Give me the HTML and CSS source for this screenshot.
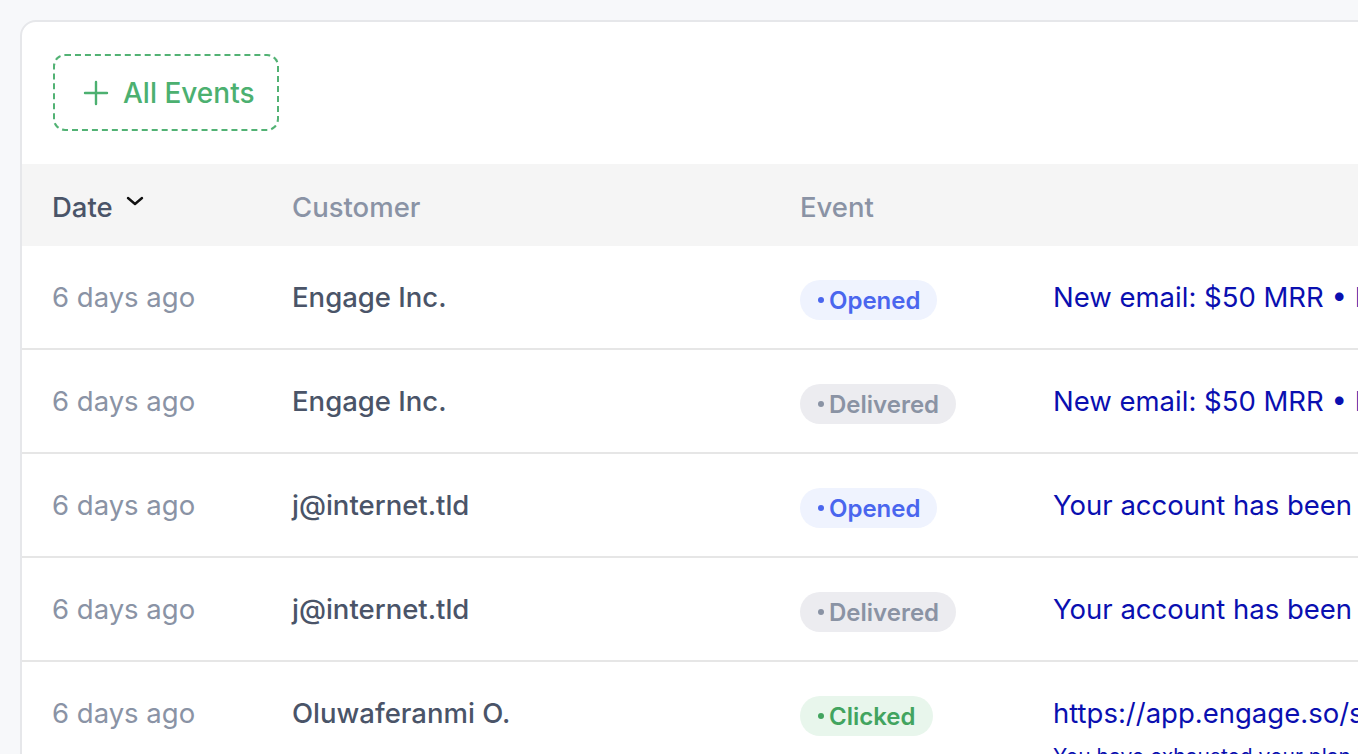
FILE: index.html
```html
<!DOCTYPE html>
<html>
<head>
<meta charset="utf-8">
<link rel="stylesheet" href="styles.css">
</head>
<body>
<div class="card">
  <div class="toolbar">
    <button class="add-btn">
      <svg class="plus" width="26" height="26" viewBox="0 0 26 26"><path d="M13 2v22M2 13h22" stroke="currentColor" stroke-width="2.4" stroke-linecap="round"/></svg>
      <span>All Events</span>
    </button>
  </div>
  <div class="table">
    <div class="row head">
      <div class="cell date-h">Date
        <svg class="chev" width="20" height="14" viewBox="0 0 20 14"><path d="M3 4l7 6 7-6" fill="none" stroke="#111" stroke-width="2.4" stroke-linecap="round" stroke-linejoin="round"/></svg>
      </div>
      <div class="cell">Customer</div>
      <div class="cell">Event</div>
      <div class="cell"></div>
    </div>
    <div class="row">
      <div class="cell date">6 days ago</div>
      <div class="cell cust">Engage Inc.</div>
      <div class="cell"><span class="badge opened"><i></i>Opened</span></div>
      <div class="cell desc"><div class="line">New email: $50 MRR • Engage Inc.</div></div>
    </div>
    <div class="row">
      <div class="cell date">6 days ago</div>
      <div class="cell cust">Engage Inc.</div>
      <div class="cell"><span class="badge delivered"><i></i>Delivered</span></div>
      <div class="cell desc"><div class="line">New email: $50 MRR • Engage Inc.</div></div>
    </div>
    <div class="row">
      <div class="cell date">6 days ago</div>
      <div class="cell cust">j@internet.tld</div>
      <div class="cell"><span class="badge opened"><i></i>Opened</span></div>
      <div class="cell desc"><div class="line">Your account has been created</div></div>
    </div>
    <div class="row">
      <div class="cell date">6 days ago</div>
      <div class="cell cust">j@internet.tld</div>
      <div class="cell"><span class="badge delivered"><i></i>Delivered</span></div>
      <div class="cell desc"><div class="line">Your account has been created</div></div>
    </div>
    <div class="row">
      <div class="cell date">6 days ago</div>
      <div class="cell cust">Oluwaferanmi O.</div>
      <div class="cell"><span class="badge clicked"><i></i>Clicked</span></div>
      <div class="cell desc"><div class="line">https://app.engage.so/settings/billing</div><div class="sub">You have exhausted your plan limit</div></div>
    </div>
  </div>
</div>
</body>
</html>
```

FILE: styles.css
```css
html, body {
  margin: 0;
  padding: 0;
  background: #f7f8fa;
  overflow: hidden;
  height: 754px;
}
body {
  padding: 20px 0 0 20px;
  font-family: Inter, "Noto Sans", sans-serif;
}
.card {
  width: 1600px;
  background: #fff;
  border: 2px solid #e6e7ea;
  border-radius: 16px;
  min-height: 900px;
  overflow: hidden;
}
.toolbar {
  padding: 32px 31px 33px;
}
.add-btn {
  display: flex;
  align-items: center;
  gap: 14px;
  width: 226px;
  height: 77px;
  padding: 0 0 0 28px;
  border: 2px dashed #52b274;
  border-radius: 12px;
  background: #fff;
  color: #4cb070;
  font-family: Inter, sans-serif;
  font-size: 28px;
  font-weight: 500;
  cursor: pointer;
}
.plus { flex: none; }
.row {
  display: grid;
  grid-template-columns: 240px 508px 253px 1fr;
  height: 102px;
  border-bottom: 2px solid #e6e6e6;
  align-items: start;
}
.row.head {
  height: 82px;
  background: #f5f5f5;
  border-bottom: none;
  align-items: center;
  color: #8a93a5;
  font-weight: 500;
}
.row.head .cell { padding-top: 3px; min-height: 0; }
.row:last-child { height: 140px; }
.cell {
  padding: 31px 0 0 30px;
  min-height: 40px;
  display: flex;
  align-items: center;
  font-size: 27.5px;
  white-space: nowrap;
}
.date-h {
  color: #4a5468;
  gap: 12px;
}
.chev { margin-top: -12px; }
.date { color: #8a93a5; }
.cust { color: #4a5468; font-weight: 500; }
.desc {
  flex-direction: column;
  align-items: flex-start;
  color: #0a0fb0;
}
.desc .line { line-height: 40px; }
.desc .sub { font-size: 21px; line-height: 28px; margin-top: 10px; }
.badge {
  display: inline-flex;
  align-items: center;
  height: 40px;
  margin-top: 3px;
  padding: 0 17px 0 18px;
  border-radius: 20px;
  font-size: 24px;
  font-weight: 600;
}
.badge i {
  width: 6px;
  height: 6px;
  border-radius: 50%;
  background: currentColor;
  margin-right: 5px;
}
.opened { background: #eff3fe; color: #4a66ee; }
.delivered { background: #ececf0; color: #8a93a4; }
.clicked { background: #e8f6ec; color: #42a45f; }
```
